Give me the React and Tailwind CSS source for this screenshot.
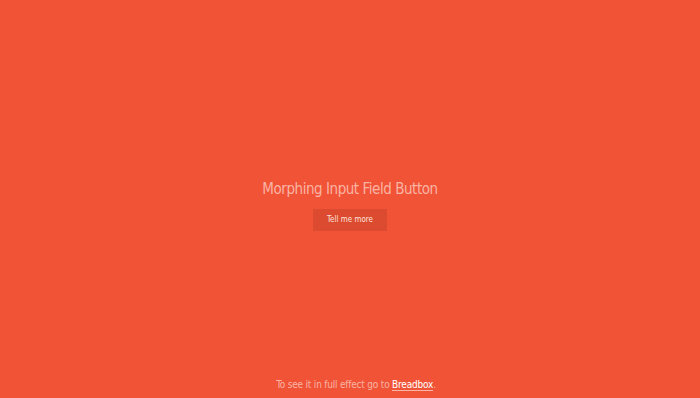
export default function App() {
  return (
    <div className="w-[700px] h-[398px] bg-[#f15336] flex flex-col items-center overflow-hidden font-['DejaVu_Sans_Condensed','DejaVu_Sans',sans-serif]">
      <div className="flex-1 flex flex-col items-center justify-center pt-[31px]">
        <h1 className="text-[15px] leading-[20px] text-[#f9b4a5] tracking-[-0.45px] font-normal">Morphing Input Field Button</h1>
        <button className="mt-[10px] w-[74px] h-[22px] bg-[#dc4a30] text-[#fde2da] text-[8px] font-normal tracking-[0px]">Tell me more</button>
      </div>
      <div className="h-[20px] ml-[12px] text-[10px] leading-[14px] text-[#f9b4a5] tracking-[-0.2px]">
        To see it in full effect go to <a className="text-white border-b border-[#f9b4a5]">Breadbox</a>.
      </div>
    </div>
  );
}
